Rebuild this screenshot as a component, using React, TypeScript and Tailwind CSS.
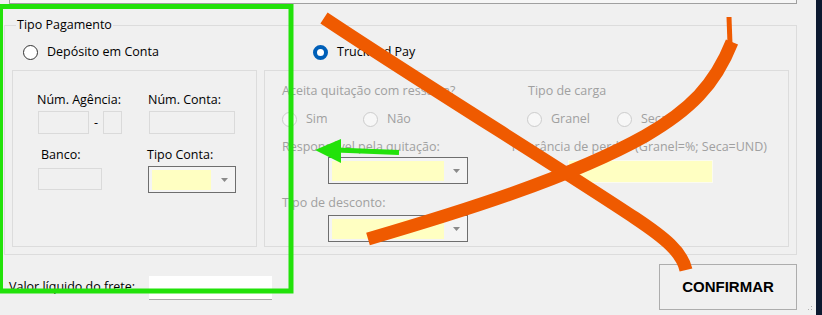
import React from 'react';

const font = "font-['Open_Sans',sans-serif] text-[12.5px] leading-[16px]";

interface RadioProps {
  label: string;
  checked?: boolean;
  disabled?: boolean;
  className?: string;
}

const Radio: React.FC<RadioProps> = ({ label, checked, disabled, className = '' }) => (
  <div className={`flex items-center ${className}`}>
    {checked ? (
      <span className="w-[15px] h-[15px] rounded-full border-[4px] border-[#005fb8] bg-white shrink-0" />
    ) : (
      <span
        className={`w-[15px] h-[15px] rounded-full border shrink-0 ${
          disabled ? 'border-[#cccccc] bg-[#f7f7f7]' : 'border-[#333333] bg-white'
        }`}
      />
    )}
    <span className={`ml-[9px] ${disabled ? 'text-[#a0a0a0]' : 'text-black'}`}>{label}</span>
  </div>
);

const Arrow = () => (
  <svg width="7" height="4" viewBox="0 0 7 4" className="shrink-0">
    <path d="M0 0h7L3.5 4z" fill="#8a8a8a" />
  </svg>
);

const Combo: React.FC<{ className?: string; fill: string }> = ({ className = '', fill }) => (
  <div className={`flex items-stretch border border-[#6e6e6e] bg-[#f4f4f4] p-[3px] pb-[2px] ${className}`}>
    <div className={`bg-[#ffffc2] ${fill}`} />
    <div className="ml-auto mr-[4px] flex items-center">
      <Arrow />
    </div>
  </div>
);

const Box: React.FC<{ className?: string }> = ({ className = '' }) => (
  <div className={`border border-[#dadada] bg-[#f0f0f0] ${className}`} />
);

export default function App() {
  return (
    <div className={`relative w-[822px] h-[315px] overflow-hidden bg-[#f0f0f0] flex ${font}`}>
      <div className="w-[816px] h-full flex flex-col">
        {/* top control edge */}
        <div className="ml-[9px] w-[788px] h-[4px] border-x border-b border-[#a0a0a0] bg-[#f6f6f6]" />

        {/* Tipo Pagamento group */}
        <div className="relative mt-[21px] ml-[4px] w-[793px] h-[230px] border border-[#dcdcdc]">
          <span className="absolute -top-[9px] left-[11px] px-[1px] bg-[#f0f0f0] text-black">Tipo Pagamento</span>

          <div className="h-[44px] pt-[8px] flex items-center">
            <div className="ml-[18px] w-[290px]">
              <Radio label="Depósito em Conta" />
            </div>
            <Radio label="TruckPad Pay" checked />
          </div>

          <div className="flex gap-[7px] ml-[7px]">
            {/* conta */}
            <div className="w-[245px] h-[177px] border border-[#dcdcdc] flex flex-col">
              <div className="mt-[21px] flex">
                <span className="ml-[24px] w-[111px]">Núm. Agência:</span>
                <span>Núm. Conta:</span>
              </div>
              <div className="mt-[3px] flex items-center">
                <Box className="ml-[25px] w-[51px] h-[23px]" />
                <span className="w-[14px] text-center">-</span>
                <Box className="w-[19px] h-[23px]" />
                <Box className="ml-[27px] w-[86px] h-[23px]" />
              </div>
              <div className="mt-[13px] flex">
                <span className="ml-[28px] w-[106px]">Banco:</span>
                <span>Tipo Conta:</span>
              </div>
              <div className="mt-[3px] flex items-start">
                <Box className="mt-[2px] ml-[25px] w-[64px] h-[22px]" />
                <Combo className="ml-[46px] w-[88px] h-[27px]" fill="w-[59px]" />
              </div>
            </div>

            {/* truckpad */}
            <div className="w-[525px] h-[177px] border border-[#dcdcdc] flex flex-col text-[#a0a0a0]">
              <div className="mt-[12px] flex">
                <span className="ml-[17px] w-[246px]">Aceita quitação com ressalva?</span>
                <span>Tipo de carga</span>
              </div>
              <div className="mt-[12px] flex">
                <Radio disabled label="Sim" className="ml-[17px] w-[81px]" />
                <Radio disabled label="Não" className="w-[164px]" />
                <Radio disabled label="Granel" className="w-[90px]" />
                <Radio disabled label="Seca" />
              </div>
              <div className="mt-[12px] flex">
                <span className="ml-[17px] w-[228px]">Responsável pela quitação:</span>
                <span>Tolerância de perdas (Granel=%; Seca=UND)</span>
              </div>
              <div className="mt-[2px] flex items-start">
                <Combo className="ml-[63px] w-[140px] h-[27px]" fill="w-[112px]" />
                <div className="ml-[100px] mt-[3px] w-[145px] h-[23px] bg-[#ffffc2] border border-[#fbfbf0]" />
              </div>
              <span className="mt-[11px] ml-[17px]">Tipo de desconto:</span>
              <Combo className="mt-[4px] ml-[63px] w-[140px] h-[27px]" fill="w-[112px]" />
            </div>
          </div>
        </div>

        {/* bottom row */}
        <div className="flex items-start">
          <span className="mt-[24px] ml-[9px] w-[140px] text-black">Valor líquido do frete:</span>
          <div className="mt-[21px] w-[123px] h-[24px] bg-white border-b border-[#a8a8a8]" />
          <button className="ml-[387px] mt-[9px] w-[138px] h-[46px] border border-[#adadad] bg-[#f0f0f0] font-['Liberation_Sans',sans-serif] font-bold text-[15px] text-black">
            CONFIRMAR
          </button>
        </div>
      </div>
      <div className="w-[6px] h-full bg-[#0c1930]" />

      {/* annotations */}
      <svg className="absolute inset-0 pointer-events-none" width="822" height="315" viewBox="0 0 822 315">
        <rect x="0.5" y="6.5" width="290.5" height="284.5" fill="none" stroke="#22e20a" strokeWidth="5" />
        <path d="M399 152.5 L336 150" stroke="#22e20a" strokeWidth="5" />
        <polygon points="315,150 341,139 341,163" fill="#22e20a" />
        <path d="M324 18 C420 82, 560 168, 635 218 C 665 238, 682 252, 686 270" fill="none" stroke="#ef5a00" strokeWidth="13" />
        <path d="M368 239 C460 212, 570 178, 645 136 C 690 110, 715 85, 732 42" fill="none" stroke="#ef5a00" strokeWidth="13" />
        <path d="M730 44 L729 17" stroke="#ef5a00" strokeWidth="5" />
        <g fill="#b0b0b0">
          <rect x="811" y="306" width="1" height="1" />
          <rect x="808" y="309" width="1" height="1" />
          <rect x="811" y="309" width="1" height="1" />
        </g>
      </svg>
    </div>
  );
}
